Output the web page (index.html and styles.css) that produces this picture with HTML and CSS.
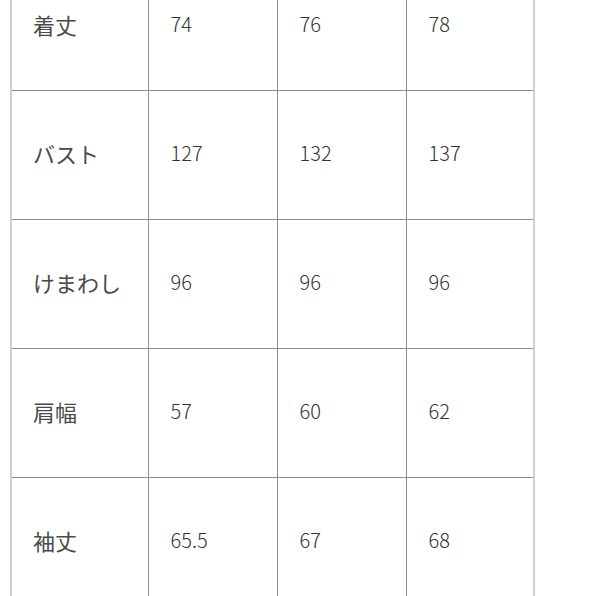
FILE: index.html
```html
<!DOCTYPE html>
<html lang="ja">
<head>
<meta charset="utf-8">
<link rel="stylesheet" href="styles.css">
</head>
<body>
<div class="frame">
  <table class="size-table">
    <colgroup>
      <col class="c1"><col class="c2"><col class="c3"><col class="c4">
    </colgroup>
    <tbody>
      <tr><th>着丈</th><td>74</td><td>76</td><td>78</td></tr>
      <tr><th>バスト</th><td>127</td><td>132</td><td>137</td></tr>
      <tr><th>けまわし</th><td>96</td><td>96</td><td>96</td></tr>
      <tr><th>肩幅</th><td>57</td><td>60</td><td>62</td></tr>
      <tr><th>袖丈</th><td>65.5</td><td>67</td><td>68</td></tr>
    </tbody>
  </table>
</div>
</body>
</html>
```

FILE: styles.css
```css
html, body {
  margin: 0;
  padding: 0;
  background: #ffffff;
}
.frame {
  width: 596px;
  height: 596px;
  overflow: hidden;
  padding-left: 10px;
  box-sizing: border-box;
}
.size-table {
  margin-top: -39px;
  border-collapse: collapse;
  table-layout: fixed;
  width: 523px;
  font-family: "Noto Sans CJK JP", "Noto Sans", sans-serif;
  color: #4a4a4a;
}
.c1 { width: 137px; }
.c2 { width: 129px; }
.c3 { width: 129px; }
.c4 { width: 128px; }
.size-table th,
.size-table td {
  height: 129px;
  padding: 0 0 5px 22px;
  text-align: left;
  vertical-align: middle;
  border: 1px solid #8e8e8e;
  font-weight: 400;
  box-sizing: border-box;
}
.size-table th {
  font-size: 22px;
  padding-left: 21px;
  border-left: 2px solid #d0d0d0;
}
.size-table td {
  font-size: 20px;
  font-weight: 300;
  color: #333333;
}
.size-table td:last-child {
  border-right: 2px solid #d0d0d0;
}
```
